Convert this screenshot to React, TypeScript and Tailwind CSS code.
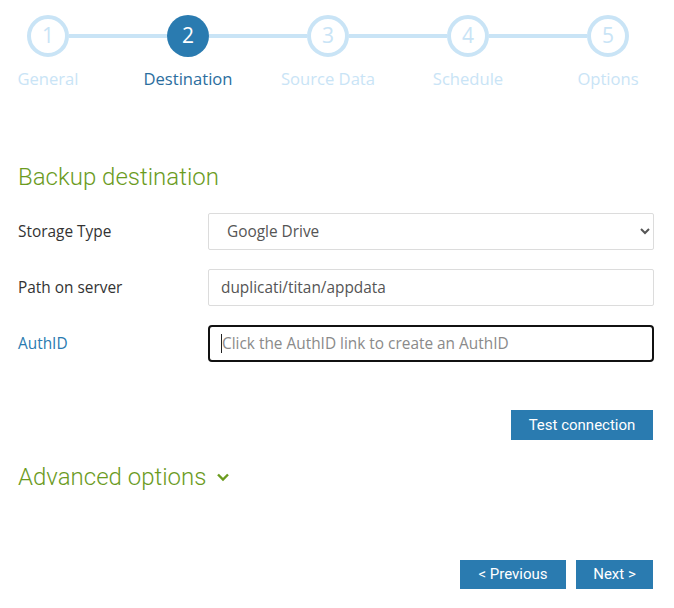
const steps = ["General", "Destination", "Source Data", "Schedule", "Options"];
const active = 1;

function Stepper() {
  return (
    <div className="pt-[15px]">
      {/* circles + connectors */}
      <div className="flex items-center pl-[27px]">
        {steps.map((s, i) => (
          <div key={s} className="flex items-center">
            {i > 0 && (
              <div className="w-[98px] h-[4px] bg-[#c9e4f6]" />
            )}
            <div
              className={
                i === active
                  ? "w-[42px] h-[42px] rounded-full bg-[#2a7bb0] flex items-center justify-center text-white text-[21px] font-medium"
                  : "w-[42px] h-[42px] rounded-full border-[4px] border-[#c9e4f6] bg-white flex items-center justify-center text-[#c9e4f6] text-[21px] font-medium"
              }
            >
              {i + 1}
            </div>
          </div>
        ))}
      </div>
      {/* labels */}
      <div className="flex gap-[44px] mt-[10px]">
        {steps.map((s, i) => (
          <div
            key={s}
            className={
              i === active
                ? "w-[96px] text-center whitespace-nowrap text-[16.6px] leading-6 text-[#2b6e9e]"
                : "w-[96px] text-center whitespace-nowrap text-[16.6px] leading-6 text-[#c9e4f6]"
            }
          >
            {s}
          </div>
        ))}
      </div>
    </div>
  );
}

export default function App() {
  return (
    <div
      className="w-[674px] h-[608px] bg-white overflow-hidden"
      style={{ fontFamily: "'Open Sans', 'Liberation Sans', sans-serif" }}
    >
      <Stepper />

      <div className="pl-[18px] pr-[20px]">
        <h2 className="mt-[70px] text-[24px] leading-8 font-light text-[#6b9b1e] font-['Roboto',sans-serif]">
          Backup destination
        </h2>

        <div className="mt-[20px] flex flex-col gap-[19px]">
          <div className="flex items-center">
            <label className="w-[190px] text-[15.4px] text-[#333]">Storage Type</label>
            <select
              defaultValue="gdrive"
              className="flex-1 h-[37px] border border-[#dcdcdc] rounded-[2px] pl-[14px] pr-[8px] text-[15.4px] text-[#555] bg-white"
            >
              <option value="gdrive">Google Drive</option>
            </select>
          </div>

          <div className="flex items-center">
            <label className="w-[190px] text-[15.4px] text-[#333]">Path on server</label>
            <input
              defaultValue="duplicati/titan/appdata"
              className="flex-1 h-[37px] border border-[#dcdcdc] rounded-[2px] px-[12px] text-[15.4px] text-[#555] bg-white"
            />
          </div>

          <div className="flex items-center">
            <label className="w-[190px] text-[15.4px] text-[#2a7bb0]">AuthID</label>
            <div className="flex-1 relative">
              <input
                placeholder="Click the AuthID link to create an AuthID"
                className="w-full h-[37px] border-2 border-[#111] rounded-[4px] px-[12px] text-[15.4px] text-[#555] placeholder:text-[#8a8a8a] bg-white outline-none"
              />
              <span className="absolute left-[13px] top-[9px] w-px h-[19px] bg-[#222]" />
            </div>
          </div>
        </div>

        <div className="mt-[48px] flex justify-end pr-px">
          <button className="h-[30px] w-[142px] bg-[#2a7bb0] text-white text-[15px] font-['Roboto',sans-serif]">
            Test connection
          </button>
        </div>

        <div className="mt-[21px] flex items-center gap-[10px] text-[#6b9b1e]">
          <span className="text-[24px] leading-8 font-light font-['Roboto',sans-serif]">Advanced options</span>
          <svg width="14" height="10" viewBox="0 0 14 10" fill="none">
            <path d="M2 2.5 L7 7.5 L12 2.5" stroke="#6b9b1e" strokeWidth="2.4" />
          </svg>
        </div>

        <div className="mt-[67px] flex justify-end gap-[10px] pr-px">
          <button className="h-[29px] w-[106px] bg-[#2a7bb0] text-white text-[15px] font-['Roboto',sans-serif]">
            &lt; Previous
          </button>
          <button className="h-[29px] w-[77px] bg-[#2a7bb0] text-white text-[15px] font-['Roboto',sans-serif]">
            Next &gt;
          </button>
        </div>
      </div>
    </div>
  );
}
